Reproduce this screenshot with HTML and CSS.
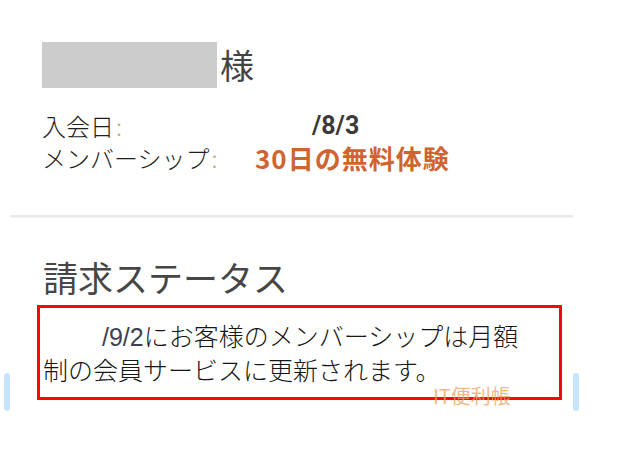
FILE: index.html
```html
<!DOCTYPE html>
<html lang="ja">
<head>
<meta charset="utf-8">
<title>会員情報</title>
<link rel="stylesheet" href="styles.css">
</head>
<body>
<div class="page">
  <section class="profile">
    <div class="name">
      <span class="redact"></span>
      <span class="sama">様</span>
    </div>
    <div class="info">
      <div class="label">入会日<span class="colon">:</span></div>
      <div class="value date"><span class="blank"></span>/8/3</div>
      <div class="label">メンバーシップ<span class="colon">:</span></div>
      <div class="value plan">30日の無料体験</div>
    </div>
  </section>
  <hr class="divider">
  <section class="billing">
    <h2 class="title">請求ステータス</h2>
    <div class="notice">
      <p class="msg"><span class="blank-year"></span><span class="num">/9/2</span>にお客様のメンバーシップは月額<br>制の会員サービスに更新されます。</p>
      <span class="watermark">IT便利帳</span>
    </div>
  </section>
  <span class="pill pill-left"></span>
  <span class="pill pill-right"></span>
</div>
</body>
</html>
```
FILE: styles.css
```css
html, body {
  margin: 0;
  padding: 0;
  background: #ffffff;
}
body {
  font-family: "Noto Sans CJK JP", "Noto Sans", sans-serif;
  color: #2a2a2a;
}
.page {
  position: relative;
  width: 640px;
  height: 453px;
  overflow: hidden;
}
.profile {
  padding: 42px 0 0 42px;
}
.name {
  display: flex;
  align-items: center;
  height: 46px;
}
.redact {
  display: block;
  width: 175px;
  height: 46px;
  background: #cccccc;
}
.sama {
  font-size: 34px;
  line-height: 46px;
  color: #444444;
  margin-left: 3px;
}
.info {
  margin-top: 22px;
  display: grid;
  grid-template-columns: 213px auto;
  font-size: 24px;
  line-height: 32px;
}
.label {
  font-weight: 300;
  color: #1e1e1e;
  white-space: nowrap;
}
.colon {
  color: #c8a88a;
  margin-left: 2px;
}
.value {
  white-space: nowrap;
}
.date {
  font-family: "Roboto", "Liberation Sans", sans-serif;
  font-weight: 700;
  font-size: 25px;
  color: #3a3a3a;
}
.blank {
  display: inline-block;
  width: 57px;
}
.plan {
  font-weight: 700;
  font-size: 26px;
  letter-spacing: 1px;
  color: #cf6430;
}
.divider {
  margin: 41px 0 0 10px;
  width: 563px;
  height: 2px;
  border: 0;
  background: #e9e9e9;
  box-shadow: 0 1px 1px #f3f3f3;
}
.billing {
  padding-top: 40px;
}
.title {
  margin: 0 0 8px 0;
  padding-left: 43px;
  font-size: 35px;
  font-weight: 400;
  line-height: 40px;
  color: #464646;
}
.notice {
  position: relative;
  box-sizing: border-box;
  margin-left: 37px;
  width: 525px;
  border: 3px solid #f00a0a;
  padding: 11px 0 12px 3px;
}
.msg {
  margin: 0;
  font-size: 25px;
  line-height: 32px;
  font-weight: 300;
  color: #161616;
  white-space: nowrap;
}
.blank-year {
  display: inline-block;
  width: 59px;
}
.num {
  font-family: "Liberation Sans", "Roboto", sans-serif;
  color: #3e4250;
}
.watermark {
  position: absolute;
  left: 393px;
  top: 78px;
  font-size: 20px;
  line-height: 20px;
  color: rgba(240, 160, 90, 0.75);
  white-space: nowrap;
}
.pill {
  position: absolute;
  top: 373px;
  width: 6px;
  height: 38px;
  border-radius: 3px;
  background: #c8e4fb;
}
.pill-left {
  left: 4px;
}
.pill-right {
  left: 573px;
}
```
